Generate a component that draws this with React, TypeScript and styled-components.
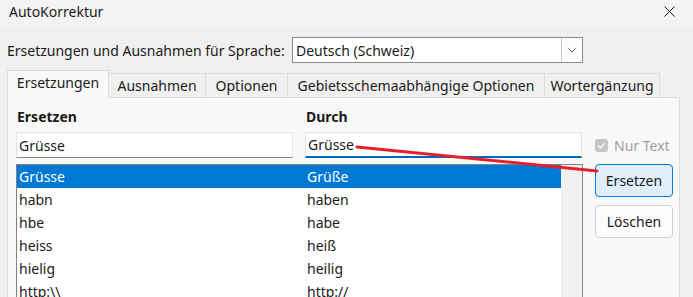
import React from "react";
import styled, { createGlobalStyle } from "styled-components";

const GlobalStyle = createGlobalStyle`
    html, body {
        margin: 0;
        padding: 0;
        background: #f0f0f0;
    }
    body {
        font-family: "Noto Sans", "Open Sans", sans-serif;
        font-size: 14px;
        color: #1a1a1a;
    }
`;

const Window = styled.div`
    position: relative;
    width: 693px;
    height: 297px;
    overflow: hidden;
    display: flex;
    flex-direction: column;
    background: #f0f0f0;
`;

const TitleBar = styled.div`
    height: 27px;
    box-sizing: border-box;
    flex: none;
    display: flex;
    align-items: center;
    justify-content: space-between;
    padding: 0 18px 5px 9px;
    background: #f3f3f3;
`;

const Title = styled.span`
    font-size: 14px;
`;

const Body = styled.div`
    flex: 1;
    display: flex;
    flex-direction: column;
    padding: 10px 13px 0 7px;
`;

const LangRow = styled.div`
    display: flex;
    align-items: center;
    height: 26px;
`;

const LangLabel = styled.span`
    width: 285px;
    flex: none;
`;

const Select = styled.div`
    width: 291px;
    height: 26px;
    box-sizing: border-box;
    display: flex;
    align-items: center;
    border: 1px solid #8a8a8a;
    background: #fff;
    padding-left: 3px;
`;

const SelectValue = styled.span`
    flex: 1;
`;

const SelectButton = styled.div`
    width: 21px;
    height: 100%;
    box-sizing: border-box;
    border-left: 1px solid #c8c8c8;
    display: flex;
    align-items: center;
    justify-content: center;
    background: #fdfdfd;
`;

const TabBar = styled.div`
    display: flex;
    align-items: flex-end;
    margin-top: 7px;
    height: 28px;
    position: relative;
    z-index: 1;
`;

const Tab = styled.div<{ $w: number; $active?: boolean }>`
    width: ${p => p.$w}px;
    height: ${p => (p.$active ? 28 : 25)}px;
    box-sizing: border-box;
    display: flex;
    align-items: center;
    justify-content: center;
    border: 1px solid #dcdcdc;
    border-bottom: ${p => (p.$active ? "none" : "1px solid #dcdcdc")};
    margin-left: -1px;
    background: ${p => (p.$active ? "#f9f9f9" : "#f0f0f0")};
    padding-bottom: ${p => (p.$active ? 4 : 1)}px;

    &:first-child {
        margin-left: 0;
    }
`;

const Panel = styled.div`
    flex: 1;
    margin-top: -1px;
    border: 1px solid #dcdcdc;
    background: #f9f9f9;
    display: grid;
    grid-template-columns: 277px 277px 79px;
    grid-template-rows: 19px 26px auto;
    column-gap: 12px;
    row-gap: 6px;
    padding: 9px 0 0 8px;
    align-content: start;
`;

const FieldLabel = styled.div`
    font-weight: 700;
    align-self: center;
    padding-left: 1px;
`;

const Input = styled.div<{ $focused?: boolean }>`
    height: 26px;
    box-sizing: border-box;
    background: #fff;
    border: 1px solid #e3e3e3;
    border-bottom: ${p => (p.$focused ? "2px solid #0067c0" : "1px solid #868686")};
    display: flex;
    align-items: center;
    padding-left: 2px;
`;

const CheckRow = styled.div`
    display: flex;
    align-items: center;
    gap: 6px;
    color: #a0a0a0;
    padding-top: 1px;
`;

const CheckBox = styled.div`
    width: 13px;
    height: 13px;
    border-radius: 3px;
    background: #c4c4c4;
    display: flex;
    align-items: center;
    justify-content: center;
    margin-left: 1px;
`;

const List = styled.div`
    grid-column: 1 / span 2;
    height: 140px;
    margin-right: -1px;
    box-sizing: border-box;
    border: 1px solid #828282;
    background: #fff;
    display: flex;
`;

const Rows = styled.div`
    flex: 1;
    display: flex;
    flex-direction: column;
`;

const Row = styled.div<{ $selected?: boolean }>`
    height: 23px;
    flex: none;
    display: grid;
    grid-template-columns: 288px 1fr;
    align-items: center;
    padding-left: 2px;
    background: ${p => (p.$selected ? "#0078d4" : "transparent")};
    color: ${p => (p.$selected ? "#fff" : "#1a1a1a")};
`;

const ScrollTrack = styled.div`
    width: 21px;
    background: #f0f0f0;
`;

const Buttons = styled.div`
    display: flex;
    flex-direction: column;
    gap: 8px;
    margin-left: 1px;
`;

const Button = styled.div<{ $primary?: boolean }>`
    width: 78px;
    height: 33px;
    box-sizing: border-box;
    border-radius: 4px;
    display: flex;
    align-items: center;
    justify-content: center;
    border: 1px solid ${p => (p.$primary ? "#0078d4" : "#d0d0d0")};
    background: ${p => (p.$primary ? "#e0eef9" : "#fdfdfd")};
`;

const Overlay = styled.svg`
    position: absolute;
    inset: 0;
    pointer-events: none;
`;

const entries: [string, string][] = [
    ["Grüsse", "Grüße"],
    ["habn", "haben"],
    ["hbe", "habe"],
    ["heiss", "heiß"],
    ["hielig", "heilig"],
    ["http:\\\\", "http://"],
];

const tabs: [string, number][] = [
    ["Ersetzungen", 102],
    ["Ausnahmen", 98],
    ["Optionen", 83],
    ["Gebietsschemaabhängige Optionen", 258],
    ["Wortergänzung", 116],
];

export default function App() {
    return (
        <Window>
            <GlobalStyle />
            <TitleBar>
                <Title>AutoKorrektur</Title>
                <svg width="11" height="11" viewBox="0 0 11 11">
                    <path d="M0.5 0.5L10.5 10.5M10.5 0.5L0.5 10.5" stroke="#1a1a1a" strokeWidth="1" />
                </svg>
            </TitleBar>
            <Body>
                <LangRow>
                    <LangLabel>Ersetzungen und Ausnahmen für Sprache:</LangLabel>
                    <Select>
                        <SelectValue>Deutsch (Schweiz)</SelectValue>
                        <SelectButton>
                            <svg width="8" height="5" viewBox="0 0 8 5">
                                <path d="M0.5 0.5L4 4L7.5 0.5" stroke="#555" strokeWidth="1" fill="none" />
                            </svg>
                        </SelectButton>
                    </Select>
                </LangRow>
                <TabBar>
                    {tabs.map(([label, w], i) => (
                        <Tab key={label} $w={w} $active={i === 0}>
                            {label}
                        </Tab>
                    ))}
                </TabBar>
                <Panel>
                    <FieldLabel>Ersetzen</FieldLabel>
                    <FieldLabel>Durch</FieldLabel>
                    <div />
                    <Input>Grüsse</Input>
                    <Input $focused>Grüsse</Input>
                    <CheckRow>
                        <CheckBox>
                            <svg width="9" height="7" viewBox="0 0 9 7">
                                <path d="M1 3.5L3.5 6L8 1" stroke="#fff" strokeWidth="1.2" fill="none" />
                            </svg>
                        </CheckBox>
                        Nur Text
                    </CheckRow>
                    <List>
                        <Rows>
                            {entries.map(([from, to], i) => (
                                <Row key={from} $selected={i === 0}>
                                    <span>{from}</span>
                                    <span>{to}</span>
                                </Row>
                            ))}
                        </Rows>
                        <ScrollTrack />
                    </List>
                    <Buttons>
                        <Button $primary>Ersetzen</Button>
                        <Button>Löschen</Button>
                    </Buttons>
                </Panel>
            </Body>
            <Overlay width="693" height="297">
                <line x1="357" y1="147" x2="597" y2="171" stroke="#e3202b" strokeWidth="3" strokeLinecap="round" />
            </Overlay>
        </Window>
    );
}
